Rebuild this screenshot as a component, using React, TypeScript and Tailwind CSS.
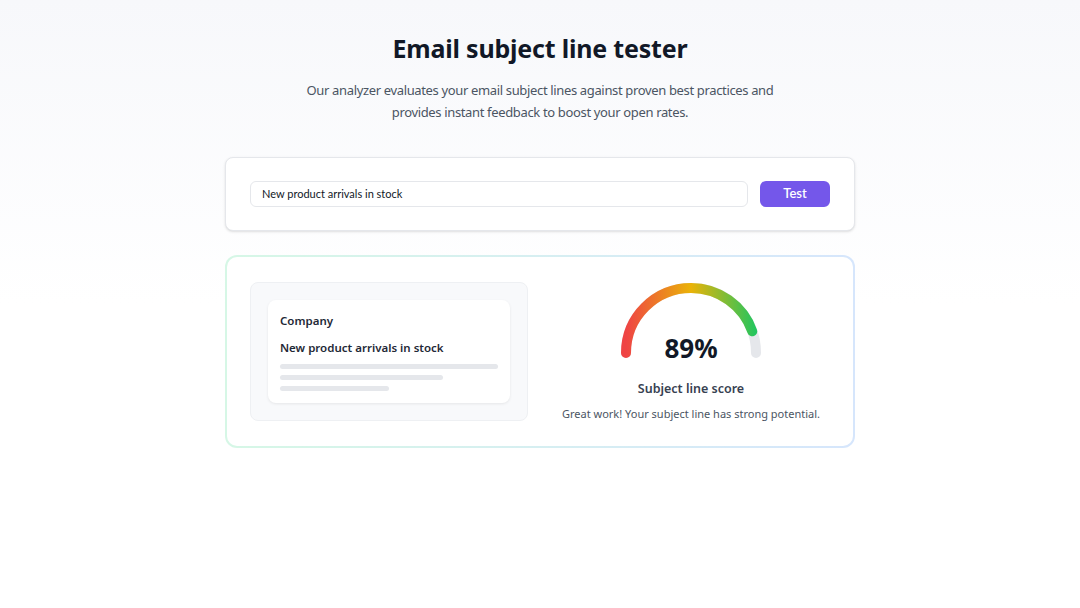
import React from "react";

function Gauge({ value }: { value: number }) {
  const r = 65;
  const cx = 75;
  const cy = 75;
  const circ = Math.PI * r;
  const arc = `M ${cx - r} ${cy} A ${r} ${r} 0 0 1 ${cx + r} ${cy}`;
  return (
    <svg width="150" height="86" viewBox="0 0 150 86">
      <defs>
        <linearGradient id="g" x1="0" y1="0" x2="1" y2="0">
          <stop offset="0%" stopColor="#ef4444" />
          <stop offset="50%" stopColor="#eab308" />
          <stop offset="100%" stopColor="#22c55e" />
        </linearGradient>
      </defs>
      <path d={arc} fill="none" stroke="#e5e7eb" strokeWidth="10" strokeLinecap="round" />
      <path
        d={arc}
        fill="none"
        stroke="url(#g)"
        strokeWidth="10"
        strokeLinecap="round"
        strokeDasharray={`${(circ * value) / 100} ${circ}`}
      />
    </svg>
  );
}

export default function App() {
  const font = { fontFamily: '"Noto Sans", "Open Sans", sans-serif' };
  return (
    <div
      className="min-h-[608px] w-full bg-gradient-to-b from-[#f7f8fb] via-white to-white text-[#111827]"
      style={font}
    >
      <div className="mx-auto flex w-[630px] flex-col items-center pt-[30px]">
        <h1 className="text-[25px] font-bold leading-[36px] tracking-[-0.2px] text-[#111827]">
          Email subject line tester
        </h1>
        <p className="mt-[13px] whitespace-nowrap text-center text-[13px] leading-[22px] tracking-[-0.35px] text-[#4b5563]">
          Our analyzer evaluates your email subject lines against proven best practices and
          <br />
          provides instant feedback to boost your open rates.
        </p>

        <div className="mt-[34px] flex w-full items-center gap-[12px] rounded-lg border border-[#e5e7eb] bg-white px-[24px] py-[23px] shadow-sm">
          <div
            className="flex h-[26px] flex-1 items-center rounded-md border border-[#e5e7eb] bg-white px-[11px] text-[11px] text-[#111827]"
            style={{ fontFamily: "Lato, sans-serif" }}
          >
            New product arrivals in stock
          </div>
          <button
            className="h-[26px] w-[70px] rounded-md bg-[#7457ea] text-[13px] font-semibold text-white"
            style={{ fontFamily: "Lato, sans-serif" }}
          >
            Test
          </button>
        </div>

        <div className="mt-[24px] w-full rounded-xl bg-gradient-to-r from-[#d6f7e6] to-[#d6e6fc] p-[2px]">
          <div className="grid grid-cols-2 items-center gap-[24px] rounded-[10px] bg-white px-[23px] py-[24px]">
            <div className="rounded-lg border border-[#eef0f3] bg-[#f8f9fb] p-[17px]">
              <div className="rounded-lg bg-white px-[12px] py-[12px] shadow-[0_1px_3px_rgba(0,0,0,0.08)]">
                <div className="text-[11.5px] font-semibold leading-[18px] text-[#1f2937]">Company</div>
                <div className="mt-[9px] text-[11.5px] font-semibold leading-[18px] text-[#1f2937]">
                  New product arrivals in stock
                </div>
                <div className="mt-[7px] flex flex-col gap-[6px]">
                  <div className="h-[5px] w-full rounded-full bg-[#e5e7eb]" />
                  <div className="h-[5px] w-[163px] rounded-full bg-[#e5e7eb]" />
                  <div className="h-[5px] w-[109px] rounded-full bg-[#e5e7eb]" />
                </div>
              </div>
            </div>
            <div className="flex flex-col items-center">
              <div className="relative mt-[-3px]">
                <Gauge value={89} />
                <div className="absolute bottom-[0px] left-0 right-0 text-center text-[26px] font-bold leading-[32px] text-[#111827]">
                  89%
                </div>
              </div>
              <div className="mt-[16px] text-[12.5px] font-semibold text-[#374151]">Subject line score</div>
              <div className="mt-[7px] text-[11px] text-[#4b5563]">
                Great work! Your subject line has strong potential.
              </div>
            </div>
          </div>
        </div>
      </div>
    </div>
  );
}
